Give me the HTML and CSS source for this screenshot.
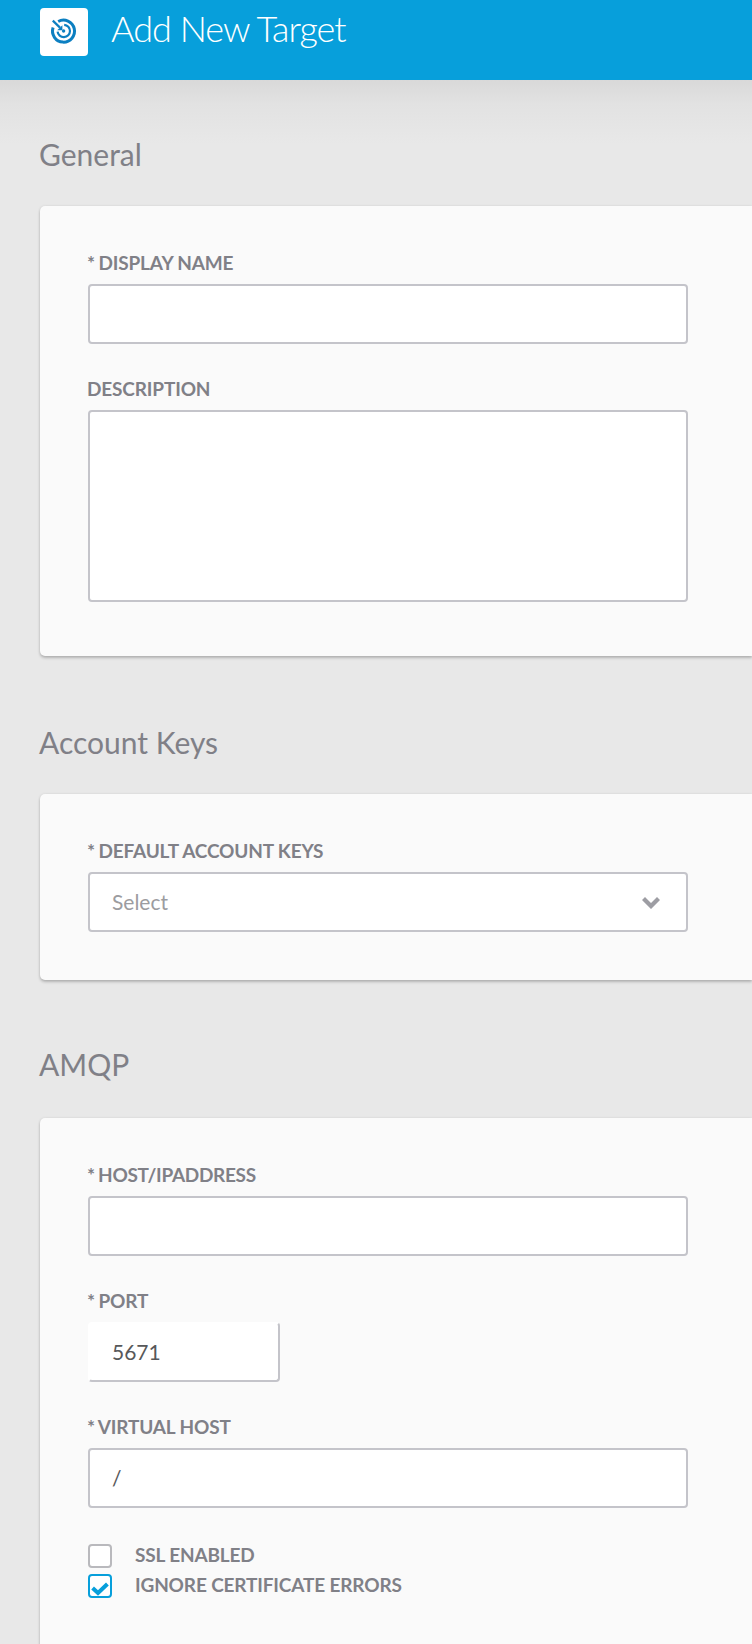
FILE: index.html
```html
<!DOCTYPE html>
<html lang="en">
<head>
<meta charset="utf-8">
<title>Add New Target</title>
<link rel="stylesheet" href="styles.css">
</head>
<body>
<header class="topbar">
  <div class="topbar-icon">
    <svg width="48" height="48" viewBox="0 0 48 48" fill="none" stroke="#0c7fc1">
      <path d="M18.2 13.5A11 11 0 1 1 13.1 19.6" stroke-width="3"/>
      <path d="M24.2 16.8A6.2 6.2 0 1 1 17.6 23.6" stroke-width="2.2"/>
      <path d="M12.8 12.6L20 19.6" stroke-width="2.2"/>
      <path d="M22.4 17.2V22.2H17.2Z" fill="#0c7fc1" stroke="none"/>
      <circle cx="23.6" cy="23" r="1.7" fill="#0c7fc1" stroke="none"/>
    </svg>
  </div>
  <h1 class="topbar-title">Add New Target</h1>
</header>
<main class="content">
  <h2 class="section-title">General</h2>
  <section class="card">
    <div class="field">
      <label class="label" for="name"><span class="star">*</span> DISPLAY NAME</label>
      <input class="input" id="name" type="text">
    </div>
    <div class="field">
      <label class="label" for="desc">DESCRIPTION</label>
      <textarea class="input textarea" id="desc"></textarea>
    </div>
  </section>

  <h2 class="section-title">Account Keys</h2>
  <section class="card card-keys">
    <div class="field">
      <span class="label"><span class="star">*</span> DEFAULT ACCOUNT KEYS</span>
      <div class="input select">
        <span>Select</span>
        <svg class="chevron" width="18" height="12" viewBox="0 0 18 12"><path d="M3 0L9 6L15 0L18 3L9 12L0 3Z" fill="#9d9da3"/></svg>
      </div>
    </div>
  </section>

  <h2 class="section-title section-amqp">AMQP</h2>
  <section class="card card-amqp">
    <div class="field">
      <label class="label label-host" for="host"><span class="star">*</span> HOST/IPADDRESS</label>
      <input class="input" id="host" type="text">
    </div>
    <div class="field">
      <label class="label" for="port"><span class="star">*</span> PORT</label>
      <input class="input port" id="port" type="text" value="5671">
    </div>
    <div class="field">
      <label class="label" for="vhost"><span class="star">*</span> VIRTUAL HOST</label>
      <input class="input" id="vhost" type="text" value="/">
    </div>
    <div class="checks">
      <div class="check"><span class="box"></span><span class="check-label">SSL ENABLED</span></div>
      <div class="check">
        <span class="box box-on"><svg width="20" height="20" viewBox="0 0 20 20"><path d="M2.6 12L8 17L17.4 8" fill="none" stroke="#079fdb" stroke-width="4"/></svg></span>
        <span class="check-label">IGNORE CERTIFICATE ERRORS</span>
      </div>
    </div>
  </section>
</main>
</body>
</html>
```
FILE: styles.css
```css
* {
  box-sizing: border-box;
}

body {
  margin: 0;
  height: 1644px;
  overflow: hidden;
  background: #e8e8e8;
  color: #808087;
  font-family: Lato, sans-serif;
}

.topbar {
  display: flex;
  height: 80px;
  padding: 8px 40px;
  gap: 23px;
  background: #079fdb;
}

.topbar-icon {
  width: 48px;
  height: 48px;
  border-radius: 4px;
  background: #fff;
}

.topbar-icon svg {
  display: block;
}

.topbar-title {
  margin: 0;
  color: #fff;
  font-size: 36px;
  font-weight: 300;
  letter-spacing: -1px;
  line-height: 41px;
}

.content {
  height: 1564px;
  padding: 54px 0 0 40px;
  background: linear-gradient(#d9d9d9, #e2e2e2 24px, #e8e8e8 64px);
}

.section-title {
  height: 72px;
  margin: 0 0 0 -1px;
  font-size: 30px;
  font-weight: 400;
  line-height: 41px;
}

.section-amqp {
  height: 74px;
}

.card {
  height: 450px;
  margin-bottom: 66px;
  padding: 42px 48px 0;
  border-radius: 5px 0 0 5px;
  background: #fafafa;
  box-shadow: 0 2px 3px rgba(0, 0, 0, 0.22), 0 0 3px rgba(0, 0, 0, 0.08);
}

.card-keys {
  height: 186px;
  margin-bottom: 64px;
}

.card-amqp {
  height: 600px;
}

.field {
  display: flex;
  flex-direction: column;
  width: 600px;
  margin-bottom: 30px;
}

.label {
  height: 36px;
  margin-left: -1px;
  line-height: 30px;
}

.label,
.check-label {
  font-size: 19px;
  font-weight: 700;
  letter-spacing: -0.15px;
}

.label-host {
  letter-spacing: -0.3px;
}

.star {
  margin-right: -1px;
}

.input {
  width: 600px;
  height: 60px;
  padding: 0 22px 1px;
  border: 2px solid #c4c4ca;
  border-radius: 4px;
  outline: 0;
  background: #fff;
  color: #57585a;
  font-family: inherit;
  font-size: 21px;
}

.textarea {
  height: 192px;
  resize: none;
}

.select {
  display: flex;
  align-items: center;
  justify-content: space-between;
  padding: 0 26px 1px 22px;
  color: #9c9ca0;
}

.chevron {
  margin-top: 3px;
}

.port {
  width: 192px;
  border-top-color: #fff;
  border-left-color: #fff;
}

.checks {
  display: grid;
  gap: 6px;
  padding-top: 6px;
}

.check {
  display: flex;
  gap: 23px;
  height: 24px;
}

.check-label {
  line-height: 21px;
}

.box {
  width: 24px;
  height: 24px;
  border: 2px solid #b9b9bd;
  border-radius: 4px;
  background: #fff;
}

.box-on {
  border-color: #079fdb;
}

.box svg {
  display: block;
}
```
